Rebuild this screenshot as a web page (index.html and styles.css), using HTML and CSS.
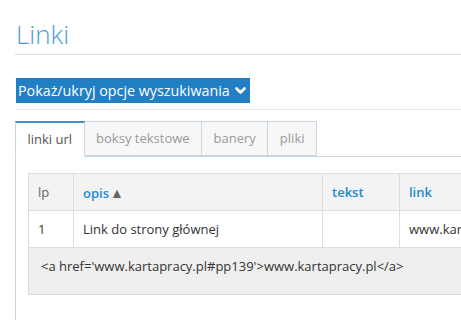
FILE: index.html
```html
<!DOCTYPE html>
<html lang="pl">
<head>
    <meta charset="UTF-8">
    <title>Linki</title>
    <link rel="stylesheet" href="styles.css">
</head>
<body>
    <div class="page">
        <h1 class="page-title">Linki</h1>

        <div class="search-bar">
            <button class="toggle-btn" type="button">
                Pokaż/ukryj opcje wyszukiwania
                <svg class="chevron" width="11" height="8" viewBox="0 0 11 8">
                    <path d="M1.5 1.5 L5.5 5.5 L9.5 1.5" fill="none" stroke="#fff" stroke-width="2.6" stroke-linecap="round" stroke-linejoin="round"/>
                </svg>
            </button>
        </div>

        <ul class="tabs">
            <li class="tab active">linki url</li>
            <li class="tab">boksy tekstowe</li>
            <li class="tab">banery</li>
            <li class="tab">pliki</li>
        </ul>

        <div class="tab-panel">
            <table class="links-table">
                <thead>
                    <tr>
                        <th class="col-lp">lp</th>
                        <th class="col-opis"><a href="#">opis</a><span class="sort">&#9650;</span></th>
                        <th class="col-tekst"><a href="#">tekst</a></th>
                        <th class="col-link"><a href="#">link</a></th>
                    </tr>
                </thead>
                <tbody>
                    <tr>
                        <td>1</td>
                        <td>Link do strony głównej</td>
                        <td></td>
                        <td>www.kartapracy.pl</td>
                    </tr>
                    <tr class="code-row">
                        <td colspan="4">&lt;a href='www.kartapracy.pl#pp139'&gt;www.kartapracy.pl&lt;/a&gt;</td>
                    </tr>
                </tbody>
            </table>
        </div>
    </div>
</body>
</html>
```

FILE: styles.css
```css
html, body {
    margin: 0;
    padding: 0;
    overflow: hidden;
    background: #fff;
}
body {
    font-family: "Open Sans", Arial, sans-serif;
    font-size: 13px;
    color: #333;
}
.page {
    padding: 18px 0 0 15px;
}
.page-title {
    margin: 0;
    padding: 0 0 4px 1px;
    font-size: 26px;
    font-weight: 300;
    line-height: 32px;
    color: #4d9bdc;
    border-bottom: 1px solid #cfdbe6;
}
.search-bar {
    padding: 23px 0 6px 1px;
    border-bottom: 1px solid #dce7f0;
}
.toggle-btn {
    display: inline-flex;
    align-items: center;
    gap: 5px;
    height: 25px;
    padding: 0 4px 0 2px;
    border: none;
    background: #2180c4;
    color: #fff;
    font-family: "Open Sans", Arial, sans-serif;
    font-size: 14.3px;
    cursor: pointer;
}
.tabs {
    display: flex;
    list-style: none;
    margin: 11px 0 0 0;
    padding: 0;
    border-bottom: 1px solid #c9d5e0;
}
.tab {
    height: 33px;
    line-height: 33px;
    padding: 0 11.5px;
    margin-bottom: -1px;
    border: 1px solid #c9d5e0;
    border-left: none;
    background: #f7f7f7;
    color: #999;
    font-size: 13px;
}
.tab.active {
    border-left: 1px solid #c9d5e0;
    border-top: 2px solid #4a8fc8;
    height: 33px;
    line-height: 32px;
    border-bottom: 1px solid #fff;
    background: #fff;
    color: #555;
}
.tab-panel {
    border-left: 1px solid #c9d5e0;
    padding: 16px 0 40px 12px;
}
.links-table {
    border-collapse: collapse;
    width: 560px;
    table-layout: fixed;
}
.links-table th,
.links-table td {
    border: 1px solid #ddd;
    padding: 0 9px;
    height: 36px;
    text-align: left;
    white-space: nowrap;
    overflow: hidden;
}
.links-table th {
    background: #f3f3f3;
    font-weight: 400;
    color: #666;
}
.links-table th a {
    color: #1c8ad4;
    font-weight: 600;
    text-decoration: none;
}
.sort {
    margin-left: 1px;
    color: #666;
    font-size: 14px;
}
.col-lp { width: 26px; }
.col-opis { width: 230px; }
.col-tekst { width: 58px; }
.links-table .code-row td {
    height: auto;
    padding: 9px 12px 19px;
    line-height: 18px;
    background: #efefef;
    vertical-align: top;
}
```
